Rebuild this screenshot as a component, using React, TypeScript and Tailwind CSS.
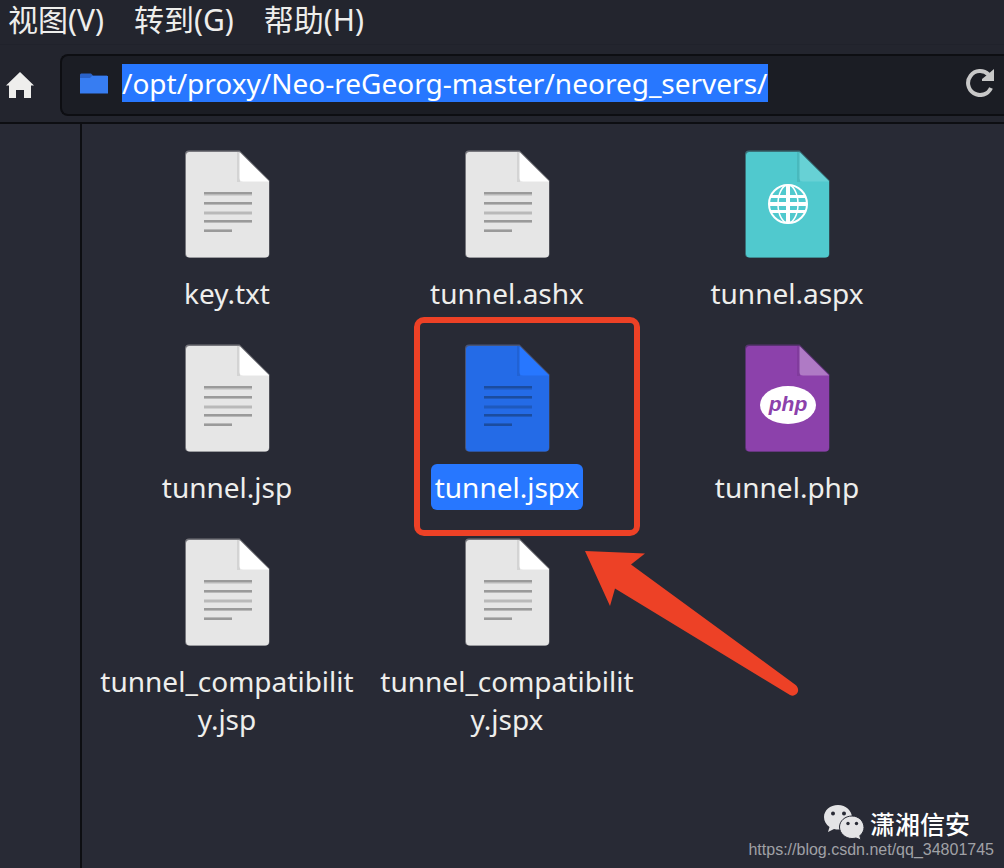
import type { ReactNode } from 'react';

type Kind = 'text' | 'web' | 'php';

interface FileEntry {
  name: string;
  kind: Kind;
  selected?: boolean;
}

const files: FileEntry[] = [
  { name: 'key.txt', kind: 'text' },
  { name: 'tunnel.ashx', kind: 'text' },
  { name: 'tunnel.aspx', kind: 'web' },
  { name: 'tunnel.jsp', kind: 'text' },
  { name: 'tunnel.jspx', kind: 'text', selected: true },
  { name: 'tunnel.php', kind: 'php' },
  { name: 'tunnel_compatibility.jsp', kind: 'text' },
  { name: 'tunnel_compatibility.jspx', kind: 'text' },
];

const menus = ['视图(V)', '转到(G)', '帮助(H)'];

function Sheet({ body, fold, edge, children }: { body: string; fold: string; edge: string; children: ReactNode }) {
  return (
    <svg viewBox="0 0 86 108" className="h-[108px] w-[86px]" aria-hidden="true">
      <path d="M5 .5H55.5L85.5 30.500V103.500a4 4 0 0 1-4 4H5a4 4 0 0 1-4-4V4.500a4 4 0 0 1 4-4Z" fill={edge} />
      <path d="M5.500 2H55L85 31V103.500a4 4 0 0 1-4 4H6a4 4 0 0 1-4-4V5.500A3.500 3.500 0 0 1 5.500 2Z" fill={body} />
      <path d="M53 2h3v30h-3Z" fill="#000" opacity=".08" />
      <path d="M55.500 2L85 31.500H59a3.500 3.500 0 0 1-3.500-3.500Z" fill={fold} />
      {children}
    </svg>
  );
}

function TextIcon({ selected }: { selected?: boolean }) {
  const line = selected ? '#1b4c9f' : '#9a9a9a';
  const soft = selected ? '#1e59bd' : '#b9b9b9';
  return (
    <Sheet body={selected ? '#246be7' : '#e6e6e6'} fold={selected ? '#2777ff' : '#fff'} edge={selected ? '#485579' : '#77777d'}>
      <path d="M20 44h48M20 53.500h48M20 63h48M20 71.500h48M20 80.500h28" stroke={soft} strokeWidth="3" />
      <path d="M20 43h48M20 53h48M20 71h48M20 81h28" stroke={line} strokeWidth="2" />
    </Sheet>
  );
}

function WebIcon() {
  return (
    <Sheet body="#50c9ce" fold="#67d1d5" edge="#397077">
      <g fill="none" stroke="#fff">
        <circle cx="44" cy="54" r="19" strokeWidth="2" />
        <ellipse cx="44" cy="54" rx="10" ry="19" strokeWidth="1.500" />
        <path d="M27 46.500h34M27 61.500h34" strokeWidth="3" />
        <path d="M44 35v38M25 54h38" strokeWidth="4" />
      </g>
    </Sheet>
  );
}

function PhpIcon() {
  return (
    <Sheet body="#8c41ab" fold="#af7ac5" edge="#593372">
      <ellipse cx="44" cy="61" rx="28" ry="19" fill="#fff" />
      <text x="44" y="67" textAnchor="middle" fill="#8c41ab" className="font-['Liberation_Sans',sans-serif] text-[21px] font-bold italic">
        php
      </text>
    </Sheet>
  );
}

function FileIcon({ file }: { file: FileEntry }) {
  if (file.kind === 'web') return <WebIcon />;
  if (file.kind === 'php') return <PhpIcon />;
  return <TextIcon selected={file.selected} />;
}

function Annotation() {
  return (
    <div className="pointer-events-none absolute top-[-27px] left-[47px]" aria-hidden="true">
      <div className="h-[219px] w-[226px] rounded-[10px] border-6 border-[#ed4126]" />
      <svg viewBox="0 0 216 146" className="absolute top-[233px] left-[170px] h-[146px] w-[216px]">
        <path d="M1 1L61 3.500L47 14.500L211 134.500C218 140 212 148 206 145L31 38.500L26 56Z" fill="#ed4126" />
      </svg>
    </div>
  );
}

function Tile({ file }: { file: FileEntry }) {
  return (
    <li className="relative flex flex-col items-center">
      <button type="button" aria-pressed={!!file.selected} className="flex w-full flex-col items-center gap-3 px-2">
        <FileIcon file={file} />
        <span className={`max-w-full rounded-md px-1 py-1 leading-[38px] break-all ${file.selected ? 'bg-[#2777ff] text-white' : ''}`}>
          {file.name}
        </span>
      </button>
      {file.selected && <Annotation />}
    </li>
  );
}

function Watermark() {
  return (
    <footer className="absolute right-2.5 bottom-2 flex flex-col items-end">
      <div className="mr-6 flex items-center gap-1.5">
        <svg viewBox="0 0 40 35" className="h-[35px] w-[40px]" aria-hidden="true">
          <path d="M14 0C6 0 0 5.500 0 12c0 4 2 7.500 5.500 10L4 27l6-3c1.500.4 3 .6 5 .6C22 24 28 19 28 12.500S22 0 14 0Z" fill="#e4e4e6" />
          <path d="M28 11c-7 0-12.500 5-12.500 11S21 33.500 28 33.500c1.500 0 3-.2 4-.5l5 2-1.200-4.200C38.500 28.500 40 25.500 40 22.500 40 16 34.500 11 28 11Z" fill="#e4e4e6" stroke="#282a35" strokeWidth="1" />
          <g fill="#282a35">
            <circle cx="9" cy="8.500" r="2" />
            <circle cx="20" cy="8.500" r="2" />
            <circle cx="24" cy="18.500" r="1.700" />
            <circle cx="32.500" cy="18.500" r="1.700" />
          </g>
        </svg>
        <span className="font-['Noto_Sans_CJK_SC',sans-serif] text-[25px] leading-8 font-medium text-white">潇湘信安</span>
      </div>
      <a href="https://blog.csdn.net/qq_34801745" className="font-['Liberation_Sans',sans-serif] text-base leading-5 text-[#a0a1a6]">
        https://blog.csdn.net/qq_34801745
      </a>
    </footer>
  );
}

export default function App() {
  return (
    <div className="relative flex min-h-screen flex-col overflow-hidden bg-[#282a35] font-['Noto_Sans','Noto_Sans_CJK_SC',sans-serif] text-[28px] text-[#eeeeec]">
      <nav className="flex h-[45px] gap-[30px] border-b border-[#20222b] bg-[#23252e] px-2 pb-1 text-[30px] leading-10">
        {menus.map((label) => (
          <button key={label} type="button" className="whitespace-nowrap">
            {label}
          </button>
        ))}
      </nav>
      <header className="flex items-center gap-[26px] border-b-2 border-[#0d0e12] bg-[#23252e] pt-[9px] pb-[6px] pl-[6px]">
        <button type="button" aria-label="主目录">
          <svg viewBox="0 0 28 26" className="h-[26px] w-[28px]" fill="#eeeeec" aria-hidden="true">
            <path d="M14 0L28 13.500H25V26H18V18H10V26H3V13.500H0Z" />
          </svg>
        </button>
        <div className="flex h-[62px] min-w-0 flex-1 items-center rounded-l-lg border-2 border-r-0 border-[#0d0e12] bg-[#1b1d24] pr-[10px] pb-1 pl-[18px]">
          <svg viewBox="0 0 28 21" className="h-[21px] w-[28px] shrink-0" aria-hidden="true">
            <path d="M0 1.500L1 .5H11L13 2.500H27L28 4V19.500H0Z" fill="#2a62c8" />
            <path d="M0 5H10L12 3H28V20.500H0Z" fill="#377df2" />
          </svg>
          <div className="flex min-w-0 flex-1 pl-[14px]">
            <input
              aria-label="路径"
              defaultValue="/opt/proxy/Neo-reGeorg-master/neoreg_servers/"
              className="field-sizing-content h-[38px] max-w-full bg-[#2777ff] leading-[38px] text-white outline-none"
            />
          </div>
          <button type="button" aria-label="重新加载" className="shrink-0">
            <svg viewBox="0 0 28 28" className="h-[28px] w-[28px]" aria-hidden="true">
              <path d="M22.500 5.500A12 12 0 1 0 25 19" fill="none" stroke="#c8c8c8" strokeWidth="4" />
              <path d="M28 0V12H16V10L21 6Z" fill="#c8c8c8" />
            </svg>
          </button>
        </div>
      </header>
      <div className="flex flex-1">
        <aside className="w-[82px] shrink-0 border-r-2 border-[#0d0e12]" />
        <main className="flex-1 pt-[26px] pl-[5px]">
          <ul className="grid grid-cols-[repeat(auto-fill,280px)] gap-y-7">
            {files.map((file) => (
              <Tile key={file.name} file={file} />
            ))}
          </ul>
        </main>
      </div>
      <Watermark />
    </div>
  );
}
